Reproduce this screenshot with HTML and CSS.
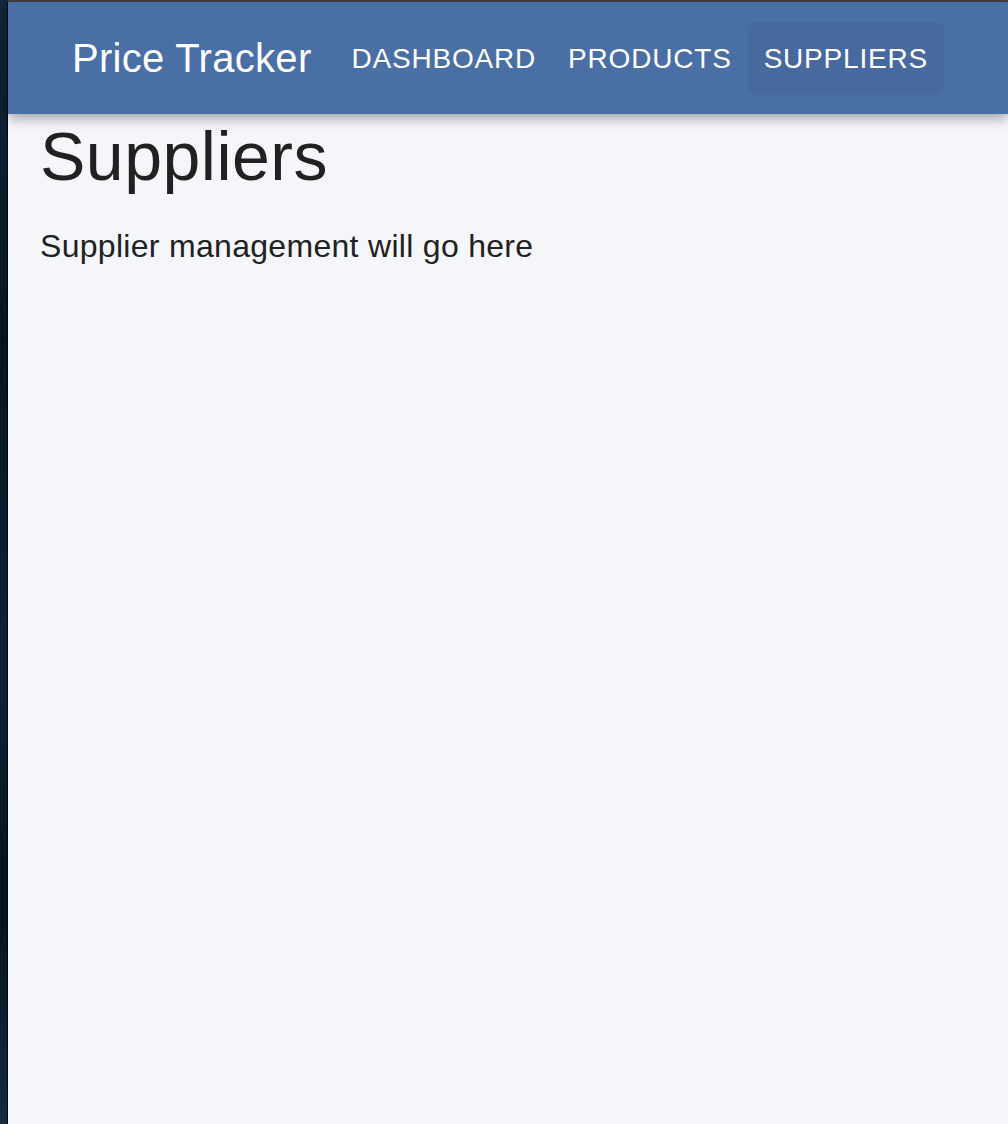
FILE: index.html
```html
<!DOCTYPE html>
<html lang="en">
<head>
<meta charset="utf-8">
<title>Price Tracker</title>
<link rel="stylesheet" href="styles.css">
</head>
<body>
<div class="desktop"></div>
<div class="window">
  <header class="appbar">
    <div class="toolbar">
      <div class="brand">Price Tracker</div>
      <nav class="nav">
        <a class="nav-btn">Dashboard</a>
        <a class="nav-btn">Products</a>
        <a class="nav-btn active">Suppliers</a>
      </nav>
    </div>
  </header>
  <main class="content">
    <h1 class="page-title">Suppliers</h1>
    <p class="page-text">Supplier management will go here</p>
  </main>
</div>
</body>
</html>
```
FILE: styles.css
```css
html, body {
  margin: 0;
  padding: 0;
  height: 100%;
}
body {
  display: flex;
  background: #0a1622;
  font-family: "Liberation Sans", Arial, Helvetica, sans-serif;
  overflow: hidden;
}
.desktop {
  width: 7px;
  flex: none;
  background: linear-gradient(180deg, #10283a 0%, #071521 30%, #0d2335 60%, #06121c 80%, #132c40 100%);
}
.window {
  flex: 1;
  display: flex;
  flex-direction: column;
  border-top: 2px solid #3f4042;
  border-left: 1px solid #05080b;
  background: #f5f6fa;
  min-height: 0;
}
.appbar {
  position: relative;
  z-index: 1;
  background: #4a6fa5;
  color: #fff;
  box-shadow: 0 4px 8px -2px rgba(0,0,0,0.18), 0 8px 10px 0 rgba(0,0,0,0.12), 0 2px 20px 0 rgba(0,0,0,0.10);
}
.toolbar {
  display: flex;
  align-items: center;
  height: 112px;
  padding-left: 64px;
}
.brand {
  font-size: 40px;
  letter-spacing: 0.3px;
  line-height: 1.6;
  margin-right: 24px;
}
.nav {
  display: flex;
}
.nav-btn {
  display: block;
  font-size: 28px;
  letter-spacing: 0.8px;
  text-transform: uppercase;
  line-height: 49px;
  padding: 12px 16px;
  border-radius: 8px;
  color: #fff;
  cursor: pointer;
}
.nav-btn.active {
  background: rgba(0,0,0,0.04);
}
.content {
  padding: 0 32px;
}
.page-title {
  margin: 0 0 24px;
  font-size: 68px;
  font-weight: 400;
  line-height: 84px;
  letter-spacing: 0.5px;
  color: #212121;
}
.page-text {
  margin: 0;
  font-size: 32px;
  line-height: 48px;
  letter-spacing: 0.3px;
  color: #212121;
}
```
